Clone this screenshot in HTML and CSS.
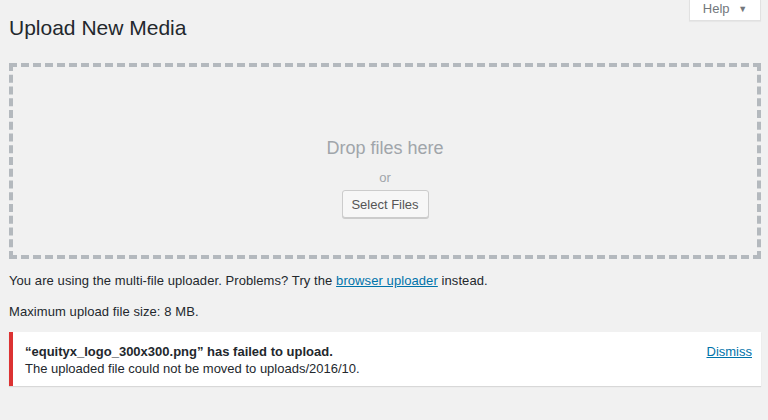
FILE: index.html
```html
<!DOCTYPE html>
<html>
<head>
<meta charset="utf-8">
<link rel="stylesheet" href="styles.css">
</head>
<body>
<div class="page">
  <div class="topbar">
    <h1 class="title">Upload New Media</h1>
    <button class="help-tab">Help <span class="caret">&#9660;</span></button>
  </div>
  <div class="drop-zone">
    <p class="drop-text">Drop files here</p>
    <p class="drop-or">or</p>
    <button class="select-btn">Select Files</button>
  </div>
  <p class="info">You are using the multi-file uploader. Problems? Try the <a href="#" class="link">browser uploader</a> instead.</p>
  <p class="info">Maximum upload file size: 8 MB.</p>
  <div class="notice">
    <div class="notice-body">
      <strong class="notice-title">“equityx_logo_300x300.png” has failed to upload.</strong>
      <span class="notice-msg">The uploaded file could not be moved to uploads/2016/10.</span>
    </div>
    <a href="#" class="link dismiss">Dismiss</a>
  </div>
</div>
</body>
</html>
```
FILE: styles.css
```css
* { box-sizing: border-box; }
html, body { margin: 0; padding: 0; }
body {
  background: #f1f1f1;
  color: #23282d;
  font-family: "Liberation Sans", Arial, sans-serif;
  font-size: 13px;
  width: 768px;
  height: 420px;
  overflow: hidden;
}
.page {
  padding: 0 7px 0 9px;
}
.topbar {
  display: flex;
  justify-content: space-between;
  align-items: flex-start;
  height: 63px;
}
.title {
  margin: 0;
  padding-top: 14px;
  font-size: 21px;
  font-weight: 400;
  line-height: 27px;
  color: #23282d;
}
.help-tab {
  width: 72px;
  height: 21px;
  background: #fff;
  border: 1px solid #e1e1e1;
  border-top: none;
  box-shadow: 0 1px 1px rgba(0,0,0,0.04);
  font-family: inherit;
  font-size: 13px;
  color: #72777c;
  padding: 0 0 2px 0;
  line-height: 18px;
}
.caret {
  font-size: 9px;
  margin-left: 5px;
  vertical-align: 1px;
}
.drop-zone {
  height: 196px;
  border: 4px dashed #b4b9be;
  display: flex;
  flex-direction: column;
  align-items: center;
  padding-top: 67px;
}
.drop-text {
  margin: 0;
  font-size: 18px;
  line-height: 28px;
  color: #a0a5aa;
}
.drop-or {
  margin: 8px 0 0;
  font-size: 13px;
  line-height: 16px;
  color: #a0a5aa;
}
.select-btn {
  margin-top: 4px;
  height: 28px;
  width: 87px;
  padding: 0;
  background: #f7f7f7;
  border: 1px solid #ccc;
  border-radius: 3px;
  box-shadow: 0 1px 0 #ccc;
  font-family: inherit;
  font-size: 13px;
  color: #555;
}
.info {
  margin: 13px 0 0;
  line-height: 18px;
  letter-spacing: 0.08px;
}
.info + .info { margin-top: 13px; }
.link {
  color: #0073aa;
  text-decoration: underline;
}
.notice {
  margin-top: 11px;
  background: #fff;
  border-left: 4px solid #dc3232;
  box-shadow: 0 1px 1px rgba(0,0,0,0.1);
  height: 54px;
  display: flex;
  justify-content: space-between;
  padding: 11px 9px 0 12px;
}
.notice-body {
  display: flex;
  flex-direction: column;
  line-height: 17px;
}
.notice-title { font-weight: 700; }
.dismiss { line-height: 17px; }
```
